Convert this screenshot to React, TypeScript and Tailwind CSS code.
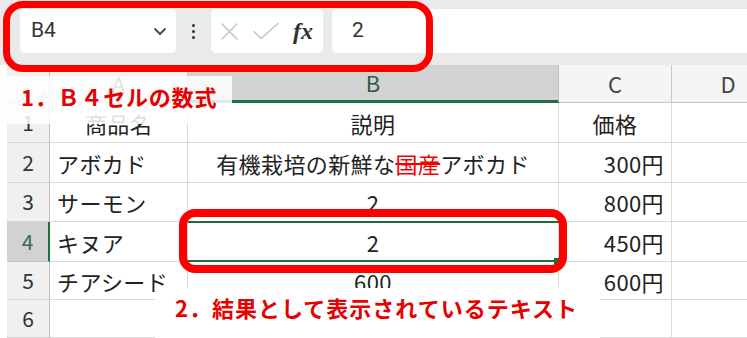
import React from "react";

const JP = { fontFamily: '"Noto Sans CJK JP", "Noto Sans", sans-serif' };

type Cell = { content: React.ReactNode; align: "left" | "center" | "right" };

function RowHeader({ n, h, selected }: { n: string; h: number; selected?: boolean }) {
  return (
    <div
      className={
        "w-[43px] shrink-0 flex items-center justify-center border-b text-[21px] " +
        (selected
          ? "bg-[#d2d2d2] text-[#3f6b4f] border-b-[#c6c6c6] border-r-2 border-r-[#1f6e3f]"
          : "bg-[#f0f0f0] text-[#333] border-b-[#d4d4d4] border-r border-r-[#c0c0c0]")
      }
      style={{ height: h }}
    >
      {n}
    </div>
  );
}

function DataCell({ w, cell, selected }: { w: string; cell: Cell; selected?: boolean }) {
  const al =
    cell.align === "left" ? "justify-start pl-[7px]" : cell.align === "right" ? "justify-end pr-[7px]" : "justify-center";
  return (
    <div className={w + " shrink-0 relative flex items-center border-r border-b border-[#dadada] text-[22px] text-[#222] tracking-[0.4px] " + al}>
      <span className="whitespace-nowrap leading-none">{cell.content}</span>
      {selected && (
        <>
          <div className="absolute left-0 right-[-1px] top-[-1px] bottom-[-1px] border-y-2 border-[#1d6b3d]" />
          <div className="absolute right-[-1px] bottom-[-3px] w-[5px] h-[6px] bg-[#1d6b3d]" />
        </>
      )}
    </div>
  );
}

export default function App() {
  const rows: { n: string; h: number; cells: Cell[]; sel?: boolean }[] = [
    {
      n: "1",
      h: 40,
      cells: [
        { content: "商品名", align: "center" },
        { content: "説明", align: "center" },
        { content: "価格", align: "center" },
        { content: "", align: "left" },
      ],
    },
    {
      n: "2",
      h: 40,
      cells: [
        { content: "アボカド", align: "left" },
        {
          content: (
            <>
              有機栽培の新鮮な
              <span className="text-[#f00000] line-through decoration-[#f00000]">国産</span>
              アボカド
            </>
          ),
          align: "center",
        },
        { content: "300円", align: "right" },
        { content: "", align: "left" },
      ],
    },
    {
      n: "3",
      h: 39,
      cells: [
        { content: "サーモン", align: "left" },
        { content: "2", align: "center" },
        { content: "800円", align: "right" },
        { content: "", align: "left" },
      ],
    },
    {
      n: "4",
      h: 40,
      sel: true,
      cells: [
        { content: "キヌア", align: "left" },
        { content: "2", align: "center" },
        { content: "450円", align: "right" },
        { content: "", align: "left" },
      ],
    },
    {
      n: "5",
      h: 38,
      cells: [
        { content: "チアシード", align: "left" },
        { content: "600", align: "center" },
        { content: "600円", align: "right" },
        { content: "", align: "left" },
      ],
    },
    {
      n: "6",
      h: 38,
      cells: [
        { content: "", align: "left" },
        { content: "", align: "center" },
        { content: "", align: "right" },
        { content: "", align: "left" },
      ],
    },
  ];
  const widths = ["w-[138px]", "w-[371px]", "w-[113px]", "w-[113px]"];

  return (
    <div className="relative w-[747px] h-[338px] overflow-hidden bg-white" style={JP}>
      {/* Formula bar */}
      <div className="h-[65px] bg-[#eaeaea] flex items-start pt-[9px] pl-[20px] gap-0">
        <div className="w-[156px] h-[44px] bg-white rounded-[5px] flex items-center pl-[11px] pr-[8px] justify-between">
          <span className="text-[21px] text-[#333]" style={{ fontFamily: "Roboto, Arial, sans-serif" }}>
            B4
          </span>
          <svg width="16" height="16" viewBox="0 0 16 16" fill="none">
            <path d="M3 6l5 5 5-5" stroke="#444" strokeWidth="1.8" strokeLinecap="round" strokeLinejoin="round" />
          </svg>
        </div>
        <div className="w-[35px] h-[44px] flex flex-col items-center justify-center gap-[3px]">
          <div className="w-[3px] h-[3px] rounded-full bg-[#333]" />
          <div className="w-[3px] h-[3px] rounded-full bg-[#333]" />
          <div className="w-[3px] h-[3px] rounded-full bg-[#333]" />
        </div>
        <div className="w-[112px] h-[44px] bg-white rounded-[5px] flex items-center pl-[9px] gap-[14px]">
          <svg width="19" height="19" viewBox="0 0 19 19" fill="none">
            <path d="M2 2l15 15M17 2L2 17" stroke="#c4c4c4" strokeWidth="1.5" strokeLinecap="round" />
          </svg>
          <svg width="26" height="19" viewBox="0 0 26 19" fill="none">
            <path d="M1 9.5l7 7L25 1.5" stroke="#c4c4c4" strokeWidth="1.5" strokeLinecap="round" strokeLinejoin="round" />
          </svg>
          <span
            className="text-[24px] italic font-bold text-[#333] leading-none"
            style={{ fontFamily: '"Liberation Serif", "DejaVu Serif", serif' }}
          >
            fx
          </span>
        </div>
        <div className="ml-[9px] flex-1 h-[44px] bg-white rounded-l-[5px] flex items-center pl-[20px]">
          <span className="text-[21px] text-[#333]" style={{ fontFamily: "Roboto, Arial, sans-serif" }}>
            2
          </span>
        </div>
      </div>

      {/* Grid */}
      <div className="pl-[7px] flex flex-col">
        {/* Column headers */}
        <div className="flex h-[38px]">
          <div className="w-[43px] shrink-0 relative bg-[#f0f0f0] border-r border-b border-[#c0c0c0]">
            <svg className="absolute right-[3px] bottom-[3px]" width="10" height="10" viewBox="0 0 10 10">
              <path d="M10 0L10 10L0 10Z" fill="#c8c8c8" />
            </svg>
          </div>
          <div className="w-[138px] shrink-0 flex items-center justify-center bg-[#f3f3f3] border-r border-b border-[#c6c6c6] text-[22px] text-[#444]">
            A
          </div>
          <div className="w-[371px] shrink-0 flex items-center justify-center bg-[#d2d2d2] border-r border-r-[#c0c0c0] border-b-[3px] border-b-[#1f6e3f] text-[22px] text-[#2f5a3f]">
            B
          </div>
          <div className="w-[113px] shrink-0 flex items-center justify-center bg-[#f5f5f5] border-r border-b border-[#c6c6c6] text-[22px] text-[#444]">
            C
          </div>
          <div className="w-[113px] shrink-0 flex items-center justify-center bg-[#f5f5f5] border-r border-b border-[#c6c6c6] text-[22px] text-[#444]">
            D
          </div>
        </div>
        {rows.map((r) => (
          <div key={r.n} className="flex" style={{ height: r.h }}>
            <RowHeader n={r.n} h={r.h} selected={r.sel} />
            {r.cells.map((c, i) => (
              <DataCell key={i} w={widths[i]} cell={c} selected={r.sel && i === 1} />
            ))}
          </div>
        ))}
      </div>

      {/* Annotations */}
      <div className="absolute left-[3px] top-[1px] w-[430px] h-[71px] border-[7px] border-[#ff0000] rounded-[20px]" />
      <div className="absolute left-[7px] top-[76px] w-[225px] h-[48px] bg-white/85 pl-[14px] pt-[6px]">
        <span className="text-[22px] font-bold text-[#e60000] leading-[28px] tracking-[0.8px] whitespace-nowrap">1．Ｂ４セルの数式</span>
      </div>
      <div className="absolute left-[179px] top-[209px] w-[388px] h-[64px] border-[8px] border-[#ff0000] rounded-[16px]" />
      <div className="absolute left-[155px] top-[288px] w-[445px] h-[50px] bg-white pl-[20px] pt-[5px]">
        <span className="text-[22px] font-bold text-[#e60000] leading-[28px] tracking-[1px] whitespace-nowrap">
          2．結果として表示されているテキスト
        </span>
      </div>
    </div>
  );
}
